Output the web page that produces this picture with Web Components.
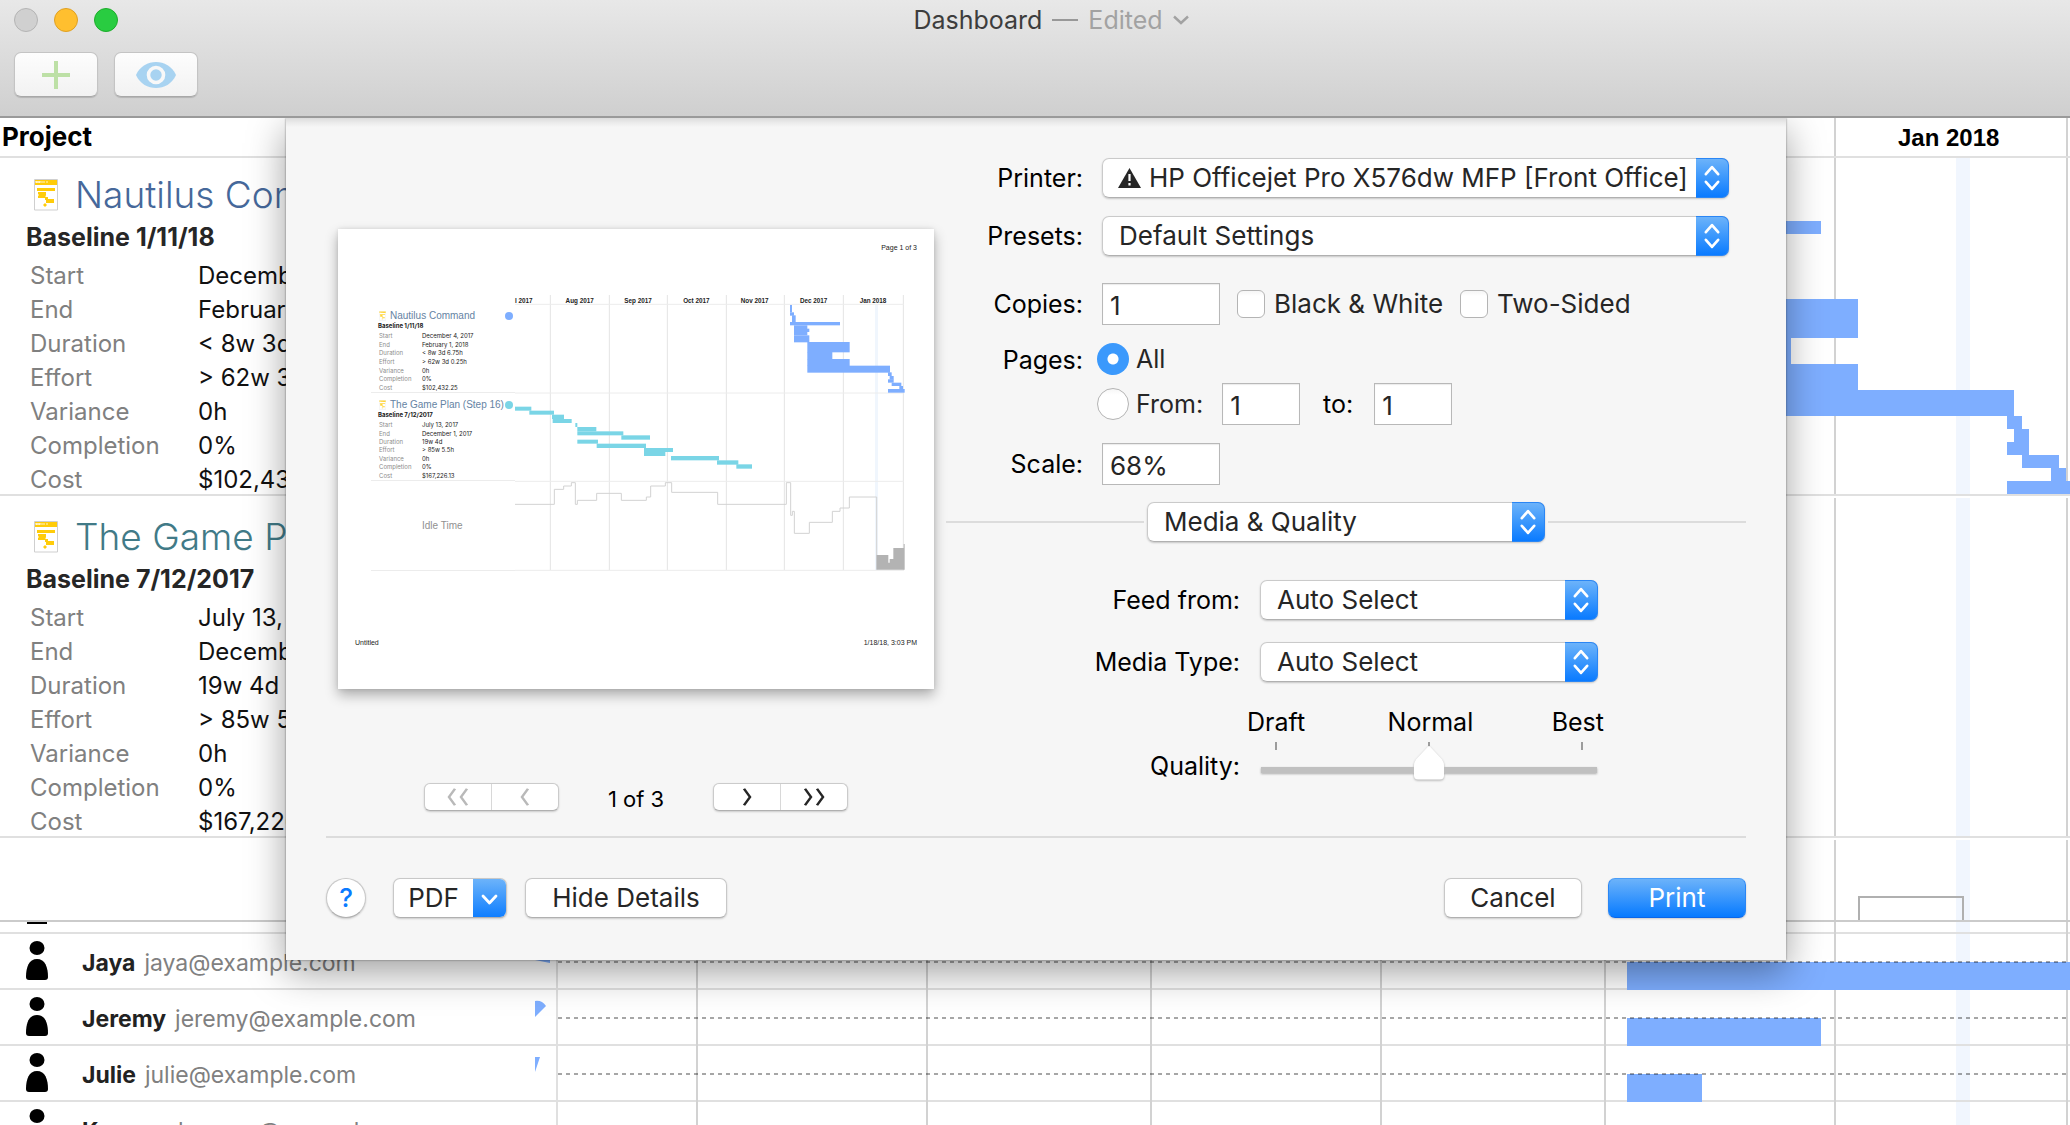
<!DOCTYPE html>
<html lang="en">
<head>
<meta charset="utf-8">
<title>Dashboard</title>
<style>
  html, body { margin: 0; height: 100%; }
  body { font-family: Inter, "Liberation Sans", sans-serif; color: #000; background: #fff; overflow: hidden; }
</style>
</head>
<body>
<app-window></app-window>

<script>
const define = (name, html) => {
  customElements.define(name, class extends HTMLElement {
    connectedCallback() {
      if (this.shadowRoot) return;
      const root = this.attachShadow({ mode: 'open' });
      root.innerHTML = typeof html === 'function' ? html(this) : html;
    }
  });
};
const reset = `*{box-sizing:border-box} button,input,select{font:inherit;color:inherit;margin:0}`;

/* ---------- title bar and toolbar ---------- */
define('title-bar', `
<style>${reset}
:host{display:flex;flex-direction:column;height:118px;box-sizing:border-box;padding:8px 14px 0;background:linear-gradient(#e8e8e8,#cfcfcf);border-bottom:2px solid #9a9a9a}
.top{display:flex;align-items:center;height:24px}
.lights{display:flex;gap:16px;width:200px}
.lights button{width:24px;height:24px;border-radius:50%;padding:0;border:1px solid #b4b4b4;background:#d0d0d0}
.lights .min{background:#ffbf2f;border-color:#dfa023}
.lights .max{background:#29cc41;border-color:#1dad2b}
h1{flex:1;margin:0;padding-right:168px;display:flex;justify-content:center;align-items:center;gap:10px;font-size:25px;line-height:26px;font-weight:400;color:#3d3d3d}
h1 .ed{color:#a2a2a2}
h1 .dash{width:26px;height:2px;background:#989898}
.tools{display:flex;gap:16px;margin-top:20px}
.tools button{width:84px;height:45px;border:1px solid #c4c4c4;border-bottom-color:#a8a8a8;border-radius:7px;background:linear-gradient(#fdfdfd,#f2f2f2);padding:0;display:flex;align-items:center;justify-content:center;box-shadow:0 1px 1px rgba(0,0,0,.15)}
svg{display:block}
</style>
<div class="top">
  <div class="lights"><button aria-label="Close"></button><button class="min" aria-label="Minimize"></button><button class="max" aria-label="Zoom"></button></div>
  <h1><span>Dashboard</span><span class="dash"></span><span class="ed">Edited</span><svg width="16" height="10" viewBox="0 0 16 10" fill="none" stroke="#a2a2a2" stroke-width="2.4"><path d="M1 1.5 8 8l7-6.5"/></svg></h1>
</div>
<div class="tools">
  <button aria-label="Add"><svg width="28" height="28" viewBox="0 0 28 28" stroke="#bde0a6" stroke-width="4"><path d="M14 0v28M0 14h28"/></svg></button>
  <button aria-label="View"><svg width="40" height="26" viewBox="0 0 40 26"><path d="M0 13C4 4 12 0 20 0s16 4 20 13c-4 9-12 13-20 13S4 22 0 13z" fill="#a8d3f1"/><circle cx="20" cy="13" r="7.5" fill="#a8d3f1" stroke="#f8f8f8" stroke-width="3.6"/></svg></button>
</div>`);

/* ---------- project summary ---------- */
define('project-icon', `
<style>:host{display:block}svg{display:block;width:100%;height:100%}</style>
<svg viewBox="0 0 24 32"><path d="M.5.5h23v30.500H.5z" fill="#fff" stroke="#cfcfcf"/><path d="M1 1h22v5H1zM3 9h18v3H3zM4 13h8v3l-1 3H4v-2l1-1-1-1zM11 18h3v2h6v4h-8v-3h-1zM11 24l2 2-2 2-2-2z" fill="#ffcc0a"/><path d="M2 4V2l1 2 1-2 1 2 1-2v2M8 2v2M10 2v2M13 2v2" stroke="#fff" stroke-width=".8" fill="none"/></svg>`);

const facts = el => el.getAttribute('facts').split('|').map(f => { const [k, v] = f.split('='); return `<dt>${k}</dt><dd>${v}</dd>`; }).join('');
define('project-card', el => `
<style>${reset}
:host{display:block;height:338px;box-sizing:border-box;padding:17px 0 0;border-bottom:2px solid #e0e0e0;white-space:nowrap;overflow:hidden}
h2{margin:0;padding-left:34px;display:flex;align-items:center;gap:17px;font-size:37px;line-height:40px;font-weight:300;color:var(--tint)}
project-icon{width:24px;height:32px}
h3{margin:5px 0 0;padding-left:26px;font-size:25px;line-height:34px;font-weight:700;color:#262626}
dl{margin:5px 0 0;padding-left:30px;display:grid;grid-template-columns:168px 1fr;font-size:24px;line-height:34px}
dt{color:#808080} dd{margin:0;color:#111}
</style>
<h2><project-icon></project-icon><slot name="title"></slot></h2>
<h3><slot name="baseline"></slot></h3>
<dl>${facts(el)}</dl>`);

/* ---------- people ---------- */
define('person-row', el => `
<style>${reset}
:host{display:flex;align-items:center;height:56px;box-sizing:border-box;padding-left:26px;border-bottom:2px solid #e0e0e0;font-size:23px;line-height:28px;white-space:nowrap}
.who{display:block;width:22px;height:40px;margin-right:34px}
b,span{padding-top:4px}
b{font-weight:700;color:#222} span{flex:1;margin-left:9px;color:#808080}
.pie{width:16px;height:44px;margin-right:5px}
</style>
<svg class="who" viewBox="0 0 22 40"><ellipse cx="11" cy="7" rx="7.500" ry="7"/><path d="M0 36c0-10 3-18 11-18s11 8 11 18c0 2-1 3-3 3H3c-2 0-3-1-3-3z"/></svg>
<b><slot></slot></b><span>${el.getAttribute('email') || ''}</span>
<svg class="pie" viewBox="0 0 16 44"><path d="${el.getAttribute('wedge') || ''}" fill="#7eaeff"/></svg>`);

/* ---------- schedule drawing ---------- */
const rects = list => list.map(([x, y, w, h]) => `<rect x="${x}" y="${y}" width="${w}" height="${h}"/>`).join('');
const months = [697, 927, 1151, 1381, 1605, 1835, 2067];
const vlines = (y1, y2) => months.map(x => `<path d="M${x} ${y1}V${y2}"/>`).join('');
define('gantt-chart', `
<style>:host{display:block;min-width:0;overflow:hidden}svg{display:block}text{font:700 24px "Liberation Sans",Arial,sans-serif}</style>
<svg width="1512" height="802" viewBox="558 118 1512 802">
  <g fill="#f1f6fe"><rect x="1956" y="157" width="14" height="337"/><rect x="1956" y="498" width="14" height="338"/><rect x="1956" y="840" width="14" height="80"/></g>
  <g stroke="#d2d2d2" stroke-width="2">${vlines(118, 494)}${vlines(498, 836)}${vlines(840, 920)}</g>
  <g stroke="#e0e0e0" stroke-width="2"><path d="M558 157H2070M558 495H2070M558 837H2070"/></g>
  <text x="1898" y="146">Jan 2018</text>
  <g fill="#7eaeff">${rects([[1700,221,121,13],[1700,299,158,39],[1700,338,91,26],[1700,364,158,26],[1700,390,314,26],[2007,416,15,13],[2014,429,15,13],[2007,442,22,13],[2022,455,37,13],[2051,468,15,13],[2007,481,63,13]])}</g>
  <path d="M1859 920V897H1963V920" fill="none" stroke="#b0b0b0" stroke-width="2"/>
</svg>`);

define('people-chart', `
<style>:host{display:block;min-width:0;overflow:hidden}svg{display:block}</style>
<svg width="1512" height="203" viewBox="558 922 1512 203">
  <rect x="1956" y="922" width="14" height="203" fill="#f1f6fe"/>
  <g stroke="#e0e0e0" stroke-width="2"><path d="M558 933H2070M558 989H2070M558 1045H2070M558 1101H2070"/></g>
  <g stroke="#d2d2d2" stroke-width="2">${vlines(922, 1125)}</g>
  <g fill="#7eaeff"><rect x="1627" y="962" width="443" height="28"/><rect x="1627" y="1018" width="194" height="28"/><rect x="1627" y="1074" width="75" height="28"/></g>
  <g stroke="#000" stroke-opacity=".35" stroke-width="2" stroke-dasharray="4 4"><path d="M558 962H2067M558 1018H2067M558 1074H2067"/></g>
</svg>`);

define('dash-board', `
<style>${reset}
:host{display:flex;flex-direction:column;flex:1;min-height:0}
.upper{display:flex;height:802px}
.side{flex:none;width:558px}
.head{height:40px;border-bottom:2px solid #e0e0e0;padding-left:2px;font-size:26px;line-height:38px;font-weight:700}
.second{padding-top:21px;height:342px}
.lower{display:flex;flex:1;min-height:0;border-top:2px solid #cbcbcb;overflow:hidden}
.lower .side{border-right:2px solid #e0e0e0;overflow:hidden}
.stub{height:12px;padding-left:27px;border-bottom:2px solid #e0e0e0}
.stub i{display:block;width:20px;height:2px;background:#000}
gantt-chart,people-chart{flex:1}
</style>
<div class="upper">
  <div class="side">
    <div class="head">Project</div>
    <project-card style="--tint:#46689a" facts="Start=December|End=February|Duration=&lt; 8w 3d|Effort=&gt; 62w 3d|Variance=0h|Completion=0%|Cost=$102,432"><span slot="title">Nautilus Com</span><span slot="baseline">Baseline 1/11/18</span></project-card>
    <project-card class="second" style="--tint:#417a87" facts="Start=July 13,|End=December|Duration=19w 4d|Effort=&gt; 85w 5|Variance=0h|Completion=0%|Cost=$167,226"><span slot="title">The Game P</span><span slot="baseline">Baseline 7/12/2017</span></project-card>
  </div>
  <gantt-chart></gantt-chart>
</div>
<div class="lower">
  <div class="side">
    <div class="stub"><i></i></div>
    <person-row email="jaya@example.com" wedge="M0 15L15 20V24L0 21z">Jaya</person-row>
    <person-row email="jeremy@example.com" wedge="M0 6Q7 5 11 11L0 22z">Jeremy</person-row>
    <person-row email="julie@example.com" wedge="M0 6L5 6L0 21z">Julie</person-row>
    <person-row email="kareem@example.com">Kareem</person-row>
  </div>
  <people-chart></people-chart>
</div>`);

/* ---------- print sheet controls ---------- */
define('popup-field', el => `
<style>${reset}
:host{display:flex;align-items:center;font-size:26px;line-height:30px}
label{flex:none;width:var(--label,137px);margin-right:var(--gap,19px);text-align:right;font-size:25px;white-space:nowrap}
:host([bare]) label{display:none}
.box{display:grid;width:var(--w);height:40px;border-radius:7px;box-shadow:0 1px 2px rgba(0,0,0,.2)}
select,.mark,.cap{grid-area:1/1}
select{appearance:none;width:100%;height:40px;border:1px solid #cacaca;border-bottom-color:#b0b0b0;border-radius:7px;background:#fff;color:#262626;padding:0 36px 0 var(--indent,16px)}
.cap{justify-self:end;width:33px;height:40px;border-radius:0 7px 7px 0;background:linear-gradient(#6cb3fa,#0a7bff);border:1px solid #2a86f5;border-left:0;pointer-events:none}
.mark{align-self:center;margin-left:16px;pointer-events:none;display:${el.hasAttribute('warn') ? 'block' : 'none'}}
</style>
<label for="s">${el.getAttribute('label')}</label>
<div class="box"><select id="s" aria-label="${el.getAttribute('label')}"><option>${el.getAttribute('value')}</option></select>
<svg class="mark" width="23" height="20" viewBox="0 0 23 20"><path d="M11.500 0 23 20H0z" fill="#262626"/><path d="M11.500 6v7M11.500 15v2.500" stroke="#fff" stroke-width="2.2"/></svg>
<svg class="cap" viewBox="0 0 33 40" fill="none" stroke="#fff" stroke-width="2.800" stroke-linecap="round" stroke-linejoin="round"><path d="M10 16l6.500-7.500L23 16M10 24l6.500 7.500L23 24"/></svg></div>`);

define('text-field', el => `
<style>${reset}
:host{display:flex;align-items:center;font-size:26px;line-height:30px}
label{flex:none;width:var(--label,137px);margin-right:var(--gap,19px);text-align:right;font-size:25px;white-space:nowrap}
input{width:var(--w,118px);height:42px;border:1px solid #b8b8b8;border-radius:0;background:#fff;color:#262626;padding:3px 0 0 7px;outline:0;box-shadow:inset 0 1px 1px rgba(0,0,0,.08)}
</style>
${el.getAttribute('label') ? `<label for="i">${el.getAttribute('label')}</label>` : ''}<input id="i" type="text" aria-label="${el.getAttribute('name') || el.getAttribute('label')}" value="${el.getAttribute('value')}">`);

define('check-box', el => `
<style>${reset}
:host{display:block;font-size:26px;line-height:30px;color:#262626}
label{display:flex;align-items:center;gap:9px;white-space:nowrap}
input{appearance:none;width:28px;height:28px;border:1px solid #b4b4b4;border-radius:6px;background:linear-gradient(#f6f6f6,#fff 20%)}
input[type=radio]{width:32px;height:32px;border-radius:50%}
:host([radio]) label{gap:7px;font-size:25px}
input[type=radio]:checked{border:0;background:radial-gradient(circle,#fff 5px,#3b99fc 6px)}
</style>
<label><input type="${el.hasAttribute('radio') ? 'radio' : 'checkbox'}" ${el.hasAttribute('on') ? 'checked' : ''}><slot></slot></label>`);

define('quality-slider', `
<style>${reset}
:host{display:flex;align-items:flex-start;font-size:25px;line-height:30px}
label{width:294px;margin-right:20px;padding-top:44px;text-align:right}
.r{width:338px}
.names{display:flex;justify-content:space-between;margin:0 -6px 0 -13px}
.names span:nth-child(2){padding-left:4px}
.ticks{display:flex;justify-content:space-between;margin:5px 15px 0}
.ticks i{width:2px;height:8px;background:#9c9c9c}
input{appearance:none;display:block;width:338px;height:36px;margin:-5px 0 0;border-radius:3px;background:linear-gradient(#c0c0c0,#c0c0c0) 1px 22px/336px 6px no-repeat;filter:drop-shadow(0 1px 1px rgba(0,0,0,.3))}
input::-webkit-slider-thumb{appearance:none;width:32px;height:35px;background:#fff;clip-path:path("M16 0 29 14Q31 17 31 20V30Q31 34 27 34H5Q1 34 1 30V20Q1 17 3 14Z")}
</style>
<label for="q">Quality:</label>
<div class="r"><div class="names"><span>Draft</span><span>Normal</span><span>Best</span></div>
<div class="ticks"><i></i><i></i><i></i></div>
<input id="q" type="range" min="0" max="2" step="1" value="1"></div>`);

define('push-button', el => `
<style>${reset}
:host{display:block}
button{display:block;width:100%;height:40px;border:1px solid #c8c8c8;border-bottom-color:#b0b0b0;border-radius:7px;background:#fff;color:#262626;font-size:26px;line-height:36px;padding:0;white-space:nowrap;box-shadow:0 1px 2px rgba(0,0,0,.18)}
:host([primary]) button{background:linear-gradient(#6cb3fa,#067aff);border-color:#4a9df8 #2a86f5 #0a66e8;color:#fff}
:host([round]) button{border-radius:50%;color:#0a7bff;font-weight:500}
</style><button><slot></slot></button>`);

define('page-nav', el => {
  const back = el.hasAttribute('back');
  const one = back ? 'M8 1 2 11l6 10' : 'M2 1l6 10L2 21', two = back ? 'M20 1l-6 10 6 10M8 1 2 11l6 10' : 'M2 1l6 10L2 21M14 1l6 10-6 10';
  const b = (d, w, n) => `<button aria-label="${n}" ${back ? 'disabled' : ''}><svg width="${w}" height="18" viewBox="0 0 ${w} 22" preserveAspectRatio="none"><path d="${d}"/></svg></button>`;
  return `<style>${reset}
:host{display:flex;width:135px;height:28px;box-sizing:border-box;border:1px solid #cbcbcb;border-bottom-color:#b0b0b0;border-radius:6px;background:#fff;box-shadow:0 1px 2px rgba(0,0,0,.18)}
button{flex:1;padding:0;border:0;background:none;display:flex;align-items:center;justify-content:center}
button+button{border-left:1px solid #d8d8d8}
path{fill:none;stroke:${back ? '#b9b9b9' : '#262626'};stroke-width:2.6}
</style>${back ? b(two, 22, 'First page') + b(one, 10, 'Previous page') : b(one, 10, 'Next page') + b(two, 22, 'Last page')}`;
});

/* ---------- page preview ---------- */
define('mini-project', el => `
<style>${reset}
:host{display:flex;flex-direction:column;width:144px;height:var(--h,89px);box-sizing:border-box;border-bottom:1px solid #ececec;padding:6px 0 0 7px;white-space:nowrap}
h4{margin:0 2px 0 0;display:flex;align-items:center;font:400 10px/12px "Liberation Sans",Arial,sans-serif;color:#6583a3}
project-icon{width:7px;height:10px;margin:0 4px 0 1px;opacity:.8}
i{width:8px;height:8px;border-radius:50%;background:var(--dot);margin-left:auto}
h5{margin:0;font-size:6px;line-height:8px;font-weight:700;color:#222}
dl{flex:1;margin:0;padding:2px 0 0 1px;display:grid;grid-template-columns:43px 1fr;grid-auto-rows:1fr;align-items:center;font-size:6px;line-height:8px}
dt{color:#8c8c8c} dd{margin:0;color:#222}
</style>
<h4><project-icon></project-icon><slot name="title"></slot><i></i></h4><h5><slot name="baseline"></slot></h5><dl>${facts(el)}</dl>`);

const mv = [106, 283, 457, 634, 808, 985, 1165];
const off = (dx, list) => rects(list.map(([x1, y, x2, h]) => [x1 + dx, y - 210, x2 - x1, h]));
define('page-preview', `
<style>${reset}
:host{display:flex;flex-direction:column;height:460px;width:596px;background:#fff;box-sizing:border-box;padding:15px 17px;box-shadow:0 6px 12px rgba(0,0,0,.3),0 0 4px rgba(0,0,0,.1);font-family:"Liberation Sans",Arial,sans-serif;font-size:7px;line-height:8px;color:#222}
.hd{text-align:right}
.body{display:flex;margin:43px 13px 0 16px;height:276px}
.col{width:144px;padding-top:9px;font-family:Inter,sans-serif;border-bottom:1px solid #ececec}
.idle{margin:39px 0 0 51px;font:400 10px/12px "Liberation Sans",Arial,sans-serif;color:#909090}
svg{display:block;overflow:visible}
text{font:700 19px "Liberation Sans",Arial,sans-serif;fill:#222}
.ft{display:flex;justify-content:space-between;margin-top:auto;padding-bottom:27px}
</style>
<div class="hd">Page 1 of 3</div>
<div class="body">
  <div class="col">
    <mini-project style="--dot:#7eaeff" facts="Start=December 4, 2017|End=February 1, 2018|Duration=&lt; 8w 3d 6.75h|Effort=&gt; 62w 3d 0.25h|Variance=0h|Completion=0%|Cost=$102,432.25"><span slot="title">Nautilus Command</span><span slot="baseline">Baseline 1/11/18</span></mini-project>
    <mini-project style="--dot:#7ad5e6;--h:88px" facts="Start=July 13, 2017|End=December 1, 2017|Duration=19w 4d|Effort=&gt; 85w 5.5h|Variance=0h|Completion=0%|Cost=$167,226.13"><span slot="title">The Game Plan (Step 16)</span><span slot="baseline">Baseline 7/12/2017</span></mini-project>
    <div class="idle">Idle Time</div>
  </div>
  <svg width="390" height="276" viewBox="0 0 1170 828">
    <rect x="1080" y="30" width="9" height="795" fill="#f0f6fd"/>
    <g stroke="#e4e4e4" stroke-width="3" fill="none">${mv.map(x => `<path d="M${x} 0V825"/>`).join('')}<path d="M0 28H1167M0 294H1167M0 559H1167M0 826H1167" stroke="#ececec"/></g>
    <text x="0" y="23">l 2017</text>
    <g text-anchor="middle"><text x="194" y="23">Aug 2017</text><text x="369" y="23">Sep 2017</text><text x="544" y="23">Oct 2017</text><text x="719" y="23">Nov 2017</text><text x="896" y="23">Dec 2017</text><text x="1074" y="23">Jan 2018</text></g>
    <g fill="#7eaeff">${off(345, [[480,240,486,22],[480,262,492,10],[486,271,497,20],[480,291,630,10],[492,301,532,11],[492,311,538,10],[492,321,532,10],[492,331,538,21],[532,351,659,31],[532,381,607,22],[532,402,659,21],[532,422,780,21],[774,442,785,11],[779,453,791,11],[774,463,791,10],[785,473,814,10],[808,483,819,10],[774,492,824,11]])}</g>
    <g fill="#7ad5e6">${off(-555, [[555,545,604,12],[598,557,672,12],[666,569,702,13],[668,582,725,12],[736,594,742,12],[742,606,799,13],[742,619,880,12],[874,631,960,13],[742,644,804,12],[800,656,948,13]])}${off(345, [[42,669,129,12],[42,681,106,12],[123,693,267,13],[261,706,325,13],[319,718,366,13]])}</g>
    <path fill="none" stroke="#d2d2d2" stroke-width="3" d="M0 628H118V583H146V573H169V563H181V628H187V616H245V595H319V616H394V606H407V573H451V563H470V592H608V628H814V563H827V661H832V649H838V715H883V682H952V649H975V639H1003V606H1085V780"/>
    <path fill="#b3b3b3" d="M1084 824V780H1120V803H1124V792H1135V759H1166V747H1169V824z"/>
  </svg>
</div>
<div class="ft"><span>Untitled</span><span>1/18/18, 3:03 PM</span></div>`);

/* ---------- print sheet ---------- */
define('print-sheet', `
<style>${reset}
:host{display:block;width:1500px;max-width:100%;height:842px;background:linear-gradient(#dcdcdc,#ececec 5px,#f6f6f6 9px);box-shadow:0 0 2px rgba(0,0,0,.45),0 12px 36px rgba(0,0,0,.38);font-size:26px;line-height:30px}
.main{display:flex;justify-content:space-between;height:718px;padding:0 40px 0 52px}
.left{width:596px;padding-top:111px}
.nav{display:flex;align-items:center;justify-content:center;margin-top:94px;font-size:22px;gap:49px;height:28px}
.nav span{line-height:28px;padding-top:3px}
.right{width:800px;padding-top:40px}
.row{display:flex;align-items:center}
.right>:nth-child(2){margin-top:18px}
.copies{margin-top:27px}
.copies check-box{margin-left:17px}
.pages{margin-top:18px;display:grid;grid-template-columns:137px 1fr;column-gap:14px;font-size:25px}
.pages>span{line-height:34px;text-align:right}
.from{grid-column:2;margin-top:6px}
.scale{margin-top:18px}
.sep{display:flex;align-items:center;gap:3px;margin-top:17px}
.sep::before,.sep::after{content:"";flex:1;height:2px;background:#dcdcdc}
.feed{margin-top:38px}.type{margin-top:22px}
quality-slider{margin-top:25px}
.foot{display:flex;align-items:center;margin:0 40px;border-top:2px solid #dcdcdc;height:122px}
.pdf{display:flex;width:114px;height:40px;margin:0 18px 0 27px;padding:0;border:1px solid #c8c8c8;border-bottom-color:#b0b0b0;border-radius:7px;background:#fff;overflow:hidden;color:#262626;box-shadow:0 1px 2px rgba(0,0,0,.18)}
.pdf span{flex:1;line-height:38px}
.pdf svg{width:33px;height:40px;background:linear-gradient(#6cb3fa,#0a7bff)}
</style>
<div class="main">
  <div class="left"><page-preview></page-preview>
    <div class="nav"><page-nav back></page-nav><span>1 of 3</span><page-nav></page-nav></div></div>
  <div class="right">
    <popup-field label="Printer:" value="HP Officejet Pro X576dw MFP [Front Office]" warn style="--w:627px;--indent:46px"></popup-field>
    <popup-field label="Presets:" value="Default Settings" style="--w:627px"></popup-field>
    <div class="row copies"><text-field label="Copies:" value="1"></text-field><check-box>Black &amp; White</check-box><check-box>Two-Sided</check-box></div>
    <div class="pages"><span>Pages:</span><check-box radio on>All</check-box>
      <div class="row from"><check-box radio>From:</check-box><text-field name="From page" label="" value="1" style="--w:78px;margin-left:19px"></text-field><text-field label="to:" value="1" style="--label:53px;--gap:21px;--w:78px"></text-field></div></div>
    <text-field class="scale" label="Scale:" value="68%"></text-field>
    <div class="sep"><popup-field bare label="Pane" value="Media &amp; Quality" style="--w:398px"></popup-field></div>
    <popup-field class="feed" label="Feed from:" value="Auto Select" style="--label:294px;--gap:20px;--w:338px"></popup-field>
    <popup-field class="type" label="Media Type:" value="Auto Select" style="--label:294px;--gap:20px;--w:338px"></popup-field>
    <quality-slider></quality-slider>
  </div>
</div>
<div class="foot">
  <push-button round style="width:40px">?</push-button>
  <button class="pdf"><span>PDF</span><svg viewBox="0 0 33 40" fill="none" stroke="#fff" stroke-width="2.8" stroke-linecap="round" stroke-linejoin="round"><path d="M10 17l6.500 7 6.500-7"/></svg></button>
  <push-button style="width:202px">Hide Details</push-button>
  <push-button style="width:138px;margin-left:auto">Cancel</push-button>
  <push-button primary style="width:138px;margin-left:26px">Print</push-button>
</div>`);

define('app-window', `
<style>
:host{display:flex;flex-direction:column;height:100vh;position:relative;overflow:hidden}
.veil{position:absolute;inset:118px 0 0;display:flex;justify-content:center;align-items:flex-start;padding-left:2px;overflow:hidden}
</style>
<title-bar></title-bar>
<dash-board></dash-board>
<div class="veil"><print-sheet role="dialog" aria-label="Print"></print-sheet></div>`);
</script>
</body>
</html>
